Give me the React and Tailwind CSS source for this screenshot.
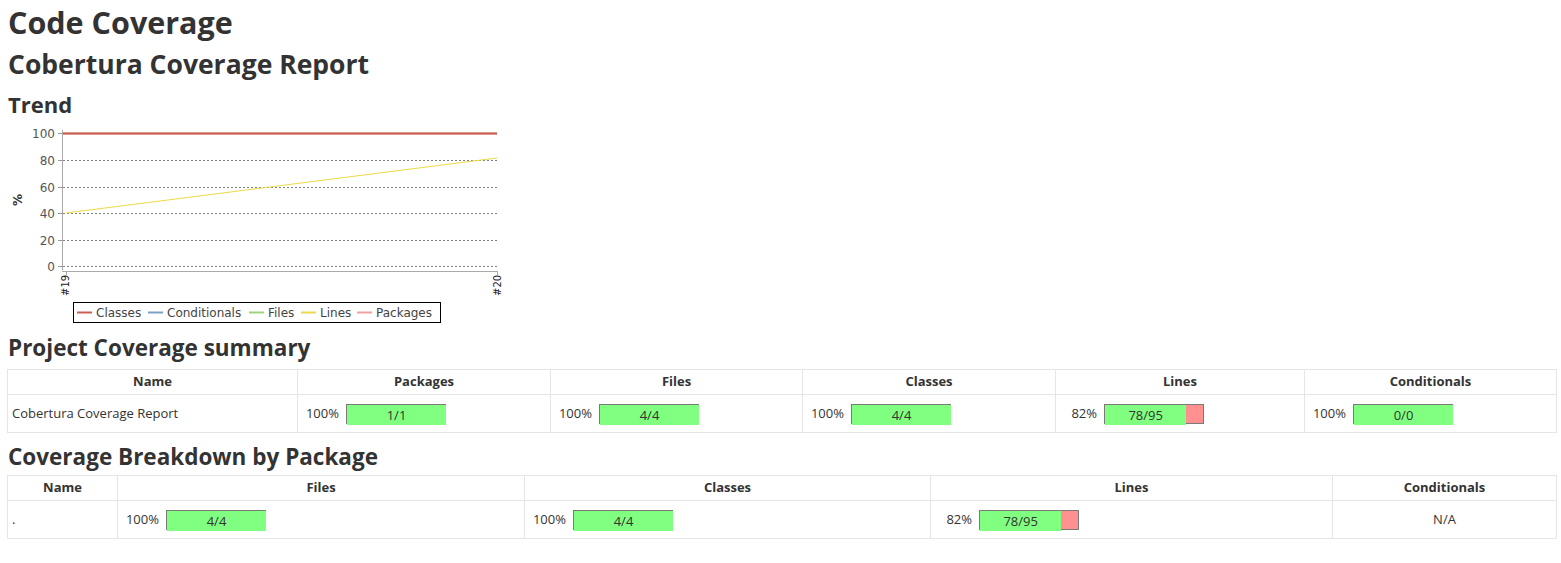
import React from 'react'

const summary = [
  { label: 'Packages', pct: 100, num: 1, den: 1 },
  { label: 'Files', pct: 100, num: 4, den: 4 },
  { label: 'Classes', pct: 100, num: 4, den: 4 },
  { label: 'Lines', pct: 82, num: 78, den: 95 },
  { label: 'Conditionals', pct: 100, num: 0, den: 0 },
]

const breakdown = [
  { label: 'Files', pct: 100, num: 4, den: 4 },
  { label: 'Classes', pct: 100, num: 4, den: 4 },
  { label: 'Lines', pct: 82, num: 78, den: 95 },
]

function Bar({ pct, num, den }) {
  const full = pct >= 100
  const green = full ? 100 : (num / den) * 100
  return (
    <div className="flex items-center">
      <span className="w-[35px] text-right">{pct}%</span>
      <div className="ml-[7px] flex h-[20px] w-[100px] border-l border-t border-[#7a7a7a]">
        <div className="flex h-[20px] items-center justify-center bg-[#80ff80] pt-[2px] text-[13px] text-[#333]" style={{ width: `${green}%` }}>
          {num}/{den}
        </div>
        {!full && <div className="h-[19px] flex-1 border-b border-r border-[#7a7a7a] bg-[#ff9090]"></div>}
      </div>
    </div>
  )
}

function TrendChart() {
  const legend = [
    { name: 'Classes', color: '#c8604f', text: 96 },
    { name: 'Conditionals', color: '#7fa0c6', text: 167 },
    { name: 'Files', color: '#9fd47c', text: 268 },
    { name: 'Lines', color: '#ecd94a', text: 320 },
    { name: 'Packages', color: '#f1a0a0', text: 376 },
  ]
  const grid = [
    { v: 100, y: 133 },
    { v: 80, y: 160 },
    { v: 60, y: 187 },
    { v: 40, y: 213 },
    { v: 20, y: 240 },
    { v: 0, y: 266 },
  ]
  return (
    <svg width="500" height="206" className="block" style={{ fontFamily: '"DejaVu Sans", sans-serif' }}>
      <g transform="translate(-8,-122)">
        {grid.map(g => (
          <g key={g.v}>
            {g.v !== 100 && (
              <line x1="63" x2="497" y1={g.y + 0.5} y2={g.y + 0.5} stroke="#808080" strokeWidth="1" strokeDasharray="2,2" />
            )}
            <line x1="58" x2="62" y1={g.y + 0.5} y2={g.y + 0.5} stroke="#999" strokeWidth="1" />
            <text x="55" y={g.y + 4.5} textAnchor="end" fontSize="12" fill="#555">{g.v}</text>
          </g>
        ))}
        <line x1="62.5" x2="62.5" y1="130" y2="270" stroke="#aaa" strokeWidth="1" />
        <line x1="62" x2="498" y1="271.5" y2="271.5" stroke="#aaa" strokeWidth="1" />
        <line x1="66.5" x2="66.5" y1="271" y2="275" stroke="#aaa" strokeWidth="1" />
        <line x1="497.5" x2="497.5" y1="271" y2="275" stroke="#aaa" strokeWidth="1" />
        <line x1="63" x2="497" y1="133.5" y2="133.5" stroke="#f1a0a0" strokeWidth="2" />
        <line x1="63" x2="497" y1="133.5" y2="133.5" stroke="#c8604f" strokeWidth="2" />
        <line x1="66" x2="497" y1="213" y2="158" stroke="#ecd94a" strokeWidth="1.2" />
        <text transform="translate(22,200) rotate(-90)" textAnchor="middle" fontSize="12" fontWeight="bold" fill="#333">%</text>
        <text transform="translate(69,296) rotate(-90)" fontSize="10" fill="#222">#19</text>
        <text transform="translate(501,296) rotate(-90)" fontSize="10" fill="#222">#20</text>
        <rect x="73.5" y="302.5" width="367" height="20" fill="#fff" stroke="#000" strokeWidth="1" />
        {legend.map(l => (
          <g key={l.name}>
            <line x1={l.text - 19} x2={l.text - 4} y1="312.5" y2="312.5" stroke={l.color} strokeWidth="2" />
            <text x={l.text} y="316.5" fontSize="12" fill="#444">{l.name}</text>
          </g>
        ))}
      </g>
    </svg>
  )
}

function App() {
  return (
    <div className="min-h-screen bg-white pl-[7px] pr-[4px] text-[13px] text-[#333]" style={{ fontFamily: '"Open Sans", "Noto Sans", sans-serif' }}>
      <h1 className="ml-[1px] pt-[2px] text-[30.5px] font-bold leading-[40px]">Code Coverage</h1>
      <h2 className="ml-[1px] mt-[4px] text-[26.5px] font-bold leading-[36px]">Cobertura Coverage Report</h2>
      <h3 className="ml-[1px] mt-[7px] text-[22px] font-bold leading-[30px]">Trend</h3>
      <div className="ml-[1px] mt-[3px]">
        <TrendChart />
      </div>

      <h3 className="ml-[1px] mt-[5px] text-[22.5px] font-bold leading-[30px]">Project Coverage summary</h3>
      <table className="mt-[6px] w-full border-collapse">
        <thead>
          <tr className="h-[25px]">
            <th className="w-[290px] border border-[#e6e6e6] font-bold">Name</th>
            <th className="w-[253px] border border-[#e6e6e6] font-bold">Packages</th>
            <th className="w-[252px] border border-[#e6e6e6] font-bold">Files</th>
            <th className="w-[253px] border border-[#e6e6e6] font-bold">Classes</th>
            <th className="w-[249px] border border-[#e6e6e6] font-bold">Lines</th>
            <th className="border border-[#e6e6e6] font-bold">Conditionals</th>
          </tr>
        </thead>
        <tbody>
          <tr className="h-[38px]">
            <td className="border border-[#e6e6e6] px-[4px]">Cobertura Coverage Report</td>
            {summary.map(s => (
              <td key={s.label} className="border border-[#e6e6e6] pl-[6px] pr-[8px]">
                <Bar pct={s.pct} num={s.num} den={s.den} />
              </td>
            ))}
          </tr>
        </tbody>
      </table>

      <h3 className="ml-[1px] mt-[9px] text-[22.5px] font-bold leading-[30px]">Coverage Breakdown by Package</h3>
      <table className="mt-[3px] w-full border-collapse">
        <thead>
          <tr className="h-[25px]">
            <th className="w-[110px] border border-[#e6e6e6] font-bold">Name</th>
            <th className="w-[407px] border border-[#e6e6e6] font-bold">Files</th>
            <th className="w-[406px] border border-[#e6e6e6] font-bold">Classes</th>
            <th className="w-[402px] border border-[#e6e6e6] font-bold">Lines</th>
            <th className="border border-[#e6e6e6] font-bold">Conditionals</th>
          </tr>
        </thead>
        <tbody>
          <tr className="h-[38px]">
            <td className="border border-[#e6e6e6] px-[4px]">.</td>
            {breakdown.map(s => (
              <td key={s.label} className="border border-[#e6e6e6] pl-[6px] pr-[8px]">
                <Bar pct={s.pct} num={s.num} den={s.den} />
              </td>
            ))}
            <td className="border border-[#e6e6e6] text-center">N/A</td>
          </tr>
        </tbody>
      </table>
    </div>
  )
}

export default App
